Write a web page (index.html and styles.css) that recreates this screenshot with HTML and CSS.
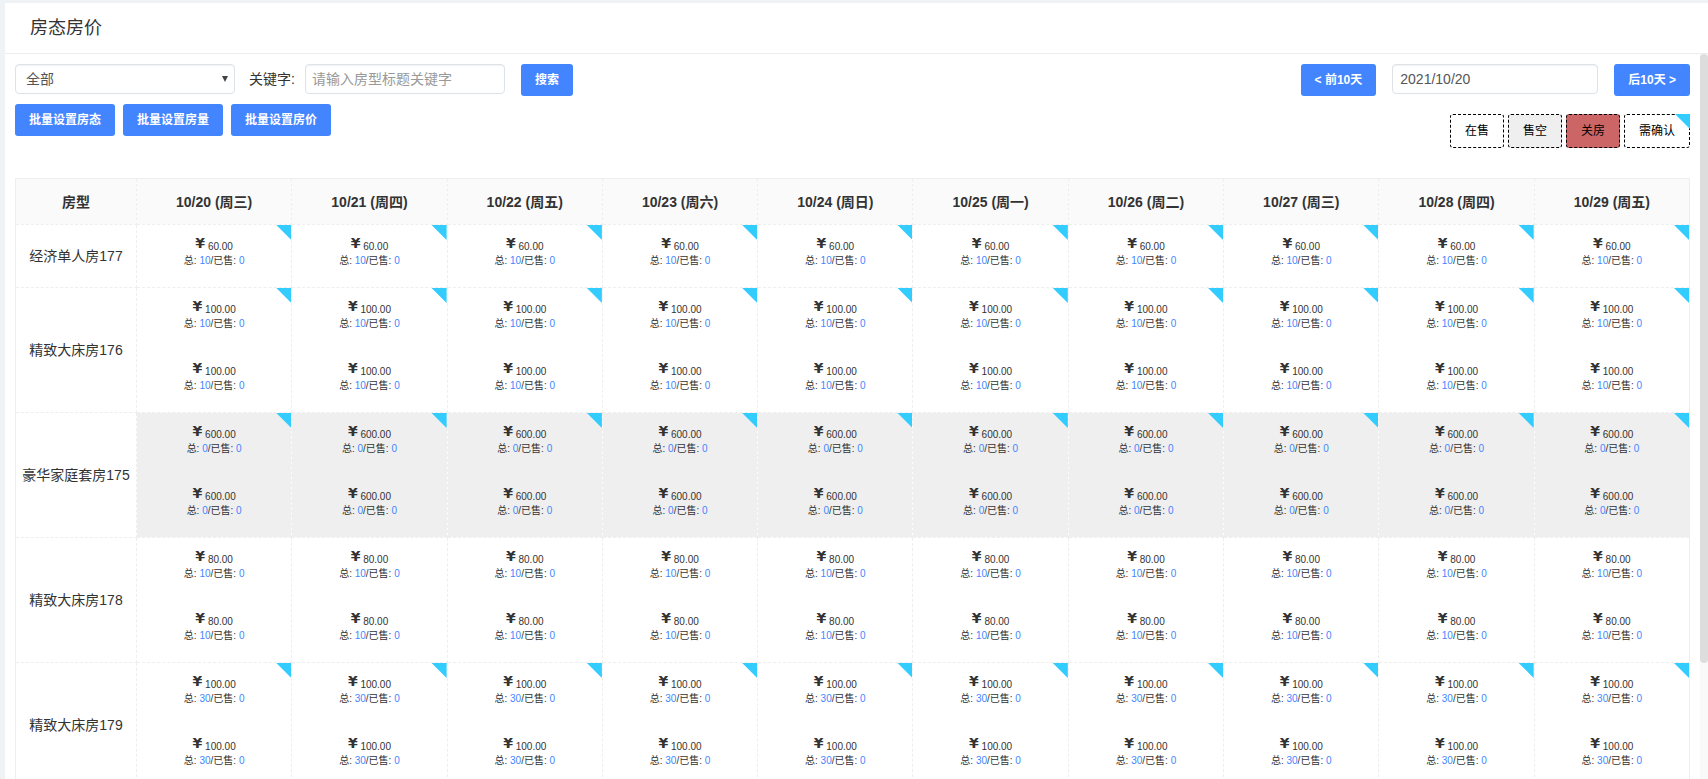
FILE: index.html
```html
<!DOCTYPE html>
<html lang="zh-CN">
<head>
<meta charset="utf-8">
<title>房态房价</title>
<link rel="stylesheet" href="styles.css">
</head>
<body>
<div class="page">
  <header class="page-header"><h1 class="page-title">房态房价</h1></header>
  <main class="content">
    <div class="toolbar">
      <div class="tools-left">
        <form class="search" onsubmit="return false">
          <div class="select-wrap">
            <select class="field type-select" aria-label="房型"><option>全部</option></select>
            <svg class="caret" viewBox="0 0 6 6" aria-hidden="true"><path d="M0 0H6L3 6Z"/></svg>
          </div>
          <label class="label" for="keyword">关键字:</label>
          <input class="field keyword" id="keyword" type="text" placeholder="请输入房型标题关键字">
          <button class="btn" type="submit">搜索</button>
        </form>
        <div class="batch">
          <button class="btn" type="button">批量设置房态</button>
          <button class="btn" type="button">批量设置房量</button>
          <button class="btn" type="button">批量设置房价</button>
        </div>
      </div>
      <div class="tools-right">
        <div class="dates">
          <button class="btn" type="button">&lt; 前10天</button>
          <input class="field date" type="text" value="2021/10/20" aria-label="日期">
          <button class="btn" type="button">后10天 &gt;</button>
        </div>
        <div class="legend">
          <span class="tag">在售</span>
          <span class="tag tag-soldout">售空</span>
          <span class="tag tag-closed">关房</span>
          <span class="tag tag-confirm">需确认</span>
        </div>
      </div>
    </div>
    <table class="rates">
      <thead><tr id="days"><th class="name-col">房型</th></tr></thead>
      <tbody id="rooms"></tbody>
    </table>
  </main>
  <div class="scrollbar" aria-hidden="true"><div class="thumb"></div></div>
</div>
<script src="rooms.js"></script>
</body>
</html>
```
FILE: styles.css
```css
* { box-sizing: border-box; }
body {
  margin: 0;
  background: #eff3f5;
  color: #333;
  font: 14px/20px "Liberation Sans", "Noto Sans CJK SC", sans-serif;
}
button, input, select { font: inherit; }
.page {
  display: grid;
  grid-template: auto minmax(0, 1fr) / minmax(0, 1fr) 8px;
  height: 100vh;
  padding: 3px 0 0 5px;
}
.page-header {
  grid-column: 1 / -1;
  padding: 12px 25px;
  background: #fff;
  border-bottom: 1px solid #ebeef0;
}
.page-title { margin: 0; font-size: 18px; line-height: 26px; font-weight: 400; }
.content { overflow: hidden; padding: 10px; background: #fff; }
.scrollbar { background: #f9f9f9; }
.thumb { height: 84%; background: #ddd; border-radius: 4px; }

.toolbar { display: flex; justify-content: space-between; margin-bottom: 30px; }
.search, .dates { display: flex; align-items: flex-start; }
.batch { display: flex; gap: 8px; margin-top: 8px; }
.select-wrap { position: relative; width: 220px; }
.field {
  height: 30px;
  padding: 0 6px;
  border: 1px solid #dde3e6;
  border-radius: 4px;
  background: #fff;
  color: #555;
  box-shadow: inset 0 1px 1px rgba(0, 0, 0, .06);
}
.field::placeholder { color: #999; }
.type-select { width: 100%; padding: 0 10px; appearance: none; }
.caret { position: absolute; top: 12px; right: 7px; width: 6px; height: 6px; fill: #444; }
.label { margin: 0 10px 0 14px; line-height: 30px; }
.keyword { width: 200px; margin-right: 16px; }
.date { width: 206px; margin: 0 16px; padding: 0 7px; }
.btn {
  height: 32px;
  padding: 0 14px;
  border: 0;
  border-radius: 3px;
  background: #4385ff;
  color: #fff;
  font-size: 12px;
  font-weight: 700;
  white-space: nowrap;
}
.legend { display: flex; justify-content: flex-end; gap: 4px; margin-top: 18px; }
.tag {
  position: relative;
  padding: 0 14px;
  border: 1px dashed #000;
  border-radius: 3px;
  color: #000;
  font-size: 12px;
  line-height: 32px;
}
.tag-soldout { background: #efefef; }
.tag-closed { background: #c66; }
.tag-confirm::after, .confirm::after {
  content: "";
  position: absolute;
  top: 0;
  right: 0;
  width: 15px;
  height: 15px;
  background: #3cf;
  clip-path: polygon(0 0, 100% 0, 100% 100%);
}
.tag-confirm::after { top: -1px; right: -1px; }

.rates {
  width: 100%;
  table-layout: fixed;
  border-collapse: collapse;
  border: 1px solid #eee;
  text-align: center;
}
.rates th, .rates td {
  position: relative;
  padding: 0;
  border: 1px dashed #eee;
  background-clip: padding-box;
}
.rates tr > :first-child { border-left: 1px solid #eee; }
.rates tr > :last-child { border-right: 1px solid #eee; }
.rates thead th { height: 46px; border-top: 1px solid #eee; background-color: #fafafa; }
.rates .name-col { width: 121px; }
.rates tbody th { font-weight: 400; }
.rates .soldout { background-color: #efefef; }
.rate { height: 62px; padding-top: 8px; font-size: 10px; line-height: 12px; }
.price { height: 22px; line-height: 20px; }
.yen { font-family: "DejaVu Sans", sans-serif; font-size: 14px; font-weight: 700; }
.amount { vertical-align: -2px; }
.num { color: #4385ff; }
```
FILE: rooms.js
```js
const days = ['10/20 (周三)', '10/21 (周四)', '10/22 (周五)', '10/23 (周六)', '10/24 (周日)',
  '10/25 (周一)', '10/26 (周二)', '10/27 (周三)', '10/28 (周四)', '10/29 (周五)'];
const rooms = [
  { name: '经济单人房177', price: '60.00', total: 10, plans: 1, confirm: true },
  { name: '精致大床房176', price: '100.00', total: 10, plans: 2, confirm: true },
  { name: '豪华家庭套房175', price: '600.00', total: 0, plans: 2, confirm: true },
  { name: '精致大床房178', price: '80.00', total: 10, plans: 2, confirm: false },
  { name: '精致大床房179', price: '100.00', total: 30, plans: 2, confirm: true }
];
document.getElementById('days').insertAdjacentHTML('beforeend',
  days.map(d => `<th>${d}</th>`).join(''));
document.getElementById('rooms').innerHTML = rooms.map(r => {
  const rate = `<div class="rate"><div class="price"><span class="yen">¥</span> <span class="amount">${r.price}</span></div>` +
    `<div>总: <span class="num">${r.total}</span>/已售: <span class="num">0</span></div></div>`;
  const cls = (r.confirm ? 'confirm' : '') + (r.total ? '' : ' soldout');
  return `<tr><th>${r.name}</th>` + days.map(() => `<td class="${cls}">${rate.repeat(r.plans)}</td>`).join('') + '</tr>';
}).join('');
```
